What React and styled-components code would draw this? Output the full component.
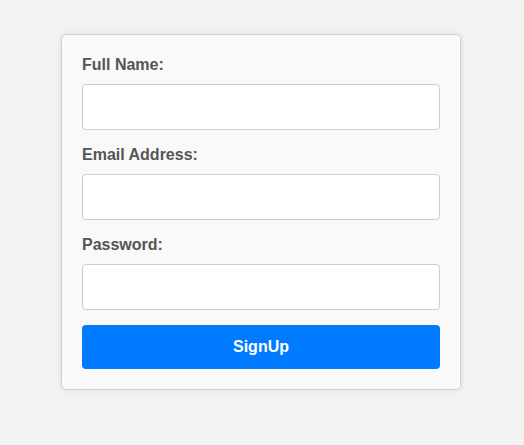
import React from "react";
import styled, { createGlobalStyle } from "styled-components";

const GlobalStyle = createGlobalStyle`
  body {
    margin: 0;
    background-color: #f2f2f2;
    font-family: "Liberation Sans", Arial, sans-serif;
  }
`;

const Page = styled.div`
  width: 524px;
  height: 445px;
  padding-top: 34px;
  box-sizing: border-box;
  display: flex;
  justify-content: center;
`;

const Card = styled.form`
  width: 400px;
  height: fit-content;
  box-sizing: border-box;
  padding: 20px;
  margin-left: -2px;
  background-color: #f9f9f9;
  border: 1px solid #d3d3d3;
  border-radius: 5px;
  box-shadow: 0 0 5px rgba(0, 0, 0, 0.1);
`;

const Group = styled.div`
  display: flex;
  flex-direction: column;
  margin-bottom: 15px;
`;

const Label = styled.label`
  font-size: 16px;
  line-height: 19px;
  font-weight: bold;
  color: #555;
  margin-bottom: 10px;
`;

const Input = styled.input`
  height: 46px;
  box-sizing: border-box;
  padding: 10px;
  font-size: 16px;
  background: #fff;
  border: 1px solid #ccc;
  border-radius: 4px;
`;

const Button = styled.button`
  display: block;
  width: 100%;
  height: 44px;
  background-color: #007bff;
  color: #fff;
  border: none;
  border-radius: 4px;
  font-family: "Liberation Sans", Arial, sans-serif;
  font-size: 16px;
  font-weight: bold;
  cursor: pointer;
`;

export default function App() {
  const fields = [
    { label: "Full Name:", type: "text" },
    { label: "Email Address:", type: "email" },
    { label: "Password:", type: "password" },
  ];
  return (
    <>
      <GlobalStyle />
      <Page>
        <Card onSubmit={(e) => e.preventDefault()}>
          {fields.map((f) => (
            <Group key={f.label}>
              <Label>{f.label}</Label>
              <Input type={f.type} />
            </Group>
          ))}
          <Button type="submit">SignUp</Button>
        </Card>
      </Page>
    </>
  );
}
